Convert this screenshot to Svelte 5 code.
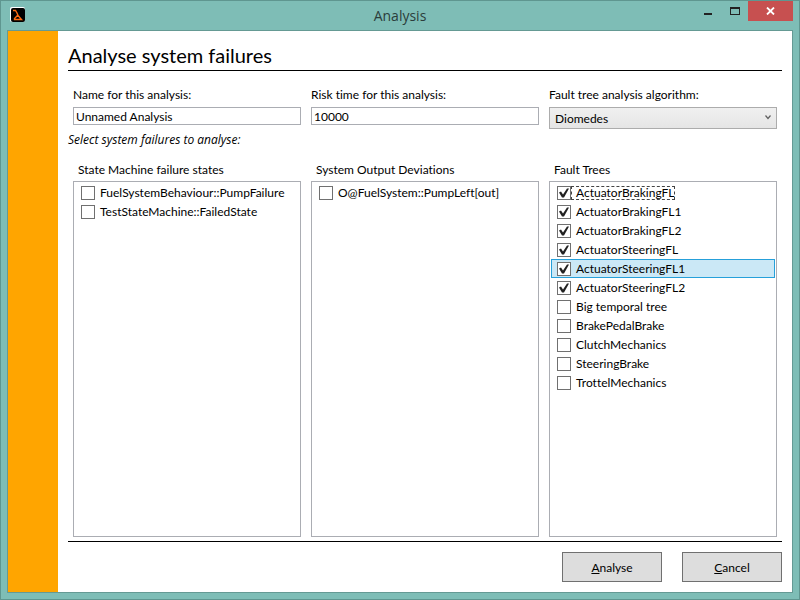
<script>
	let name = "Unnamed Analysis";
	let riskTime = "10000";
	let algorithm = "Diomedes";
	let selected = "ActuatorSteeringFL1";

	let groups = [
		{
			title: "State Machine failure states",
			items: [
				{ label: "FuelSystemBehaviour::PumpFailure", checked: false },
				{ label: "TestStateMachine::FailedState", checked: false },
			],
		},
		{
			title: "System Output Deviations",
			items: [{ label: "O@FuelSystem::PumpLeft[out]", checked: false }],
		},
		{
			title: "Fault Trees",
			items: [
				{ label: "ActuatorBrakingFL", checked: true, focused: true },
				{ label: "ActuatorBrakingFL1", checked: true },
				{ label: "ActuatorBrakingFL2", checked: true },
				{ label: "ActuatorSteeringFL", checked: true },
				{ label: "ActuatorSteeringFL1", checked: true },
				{ label: "ActuatorSteeringFL2", checked: true },
				{ label: "Big temporal tree", checked: false },
				{ label: "BrakePedalBrake", checked: false },
				{ label: "ClutchMechanics", checked: false },
				{ label: "SteeringBrake", checked: false },
				{ label: "TrottelMechanics", checked: false },
			],
		},
	];
</script>

<div class="window">
	<header>
		<svg class="logo" width="16" height="16" viewBox="0 0 16 16">
			<rect x="0" y="0" width="15" height="15" rx="2" fill="#fff" />
			<rect x="1" y="1" width="14" height="14" rx="2" fill="#000" />
			<path
				d="M3 3.5H5.5L7 6L8 8.5L11.5 12.5H4.5V11.5L8 8"
				fill="none"
				stroke="#ff6a10"
				stroke-width="1.4"
			/>
		</svg>
		<span class="caption">Analysis</span>
		<div class="controls">
			<button class="minimize" aria-label="Minimize">
				<svg width="8" height="8" viewBox="0 0 8 8">
					<rect x="0" y="6" width="8" height="2" fill="#222" />
				</svg>
			</button>
			<button class="maximize" aria-label="Maximize">
				<svg width="10" height="8" viewBox="0 0 10 8">
					<path d="M0 0H10V8H0ZM1 2V7H9V2Z" fill="#222" fill-rule="evenodd" />
				</svg>
			</button>
			<button class="close" aria-label="Close">
				<svg width="9" height="8" viewBox="0 0 9 8">
					<path d="M1 0.5L8 7.5M8 0.5L1 7.5" stroke="#fff" stroke-width="1.8" />
				</svg>
			</button>
		</div>
	</header>

	<div class="body">
		<div class="stripe"></div>
		<main>
			<h1>Analyse system failures</h1>

			<div class="columns fields">
				<div>
					<label for="name">Name for this analysis:</label>
					<input id="name" type="text" bind:value={name} />
				</div>
				<div>
					<label for="risk">Risk time for this analysis:</label>
					<input id="risk" type="text" bind:value={riskTime} />
				</div>
				<div>
					<label for="algorithm">Fault tree analysis algorithm:</label>
					<div class="combo">
						<select id="algorithm" bind:value={algorithm}>
							<option>Diomedes</option>
						</select>
						<svg width="6" height="5" viewBox="0 0 6 5">
							<path
								d="M0.5 0.5L3 3.5L5.5 0.5"
								fill="none"
								stroke="#606060"
								stroke-width="1.2"
							/>
						</svg>
					</div>
				</div>
			</div>

			<p class="hint">Select system failures to analyse:</p>

			<div class="columns lists">
				{#each groups as group}
					<section>
						<h2>{group.title}</h2>
						<ul>
							{#each group.items as item}
								<li class:selected={item.label == selected}>
									<label>
										<input type="checkbox" bind:checked={item.checked} />
										<span class:focused={item.focused}>{item.label}</span>
									</label>
								</li>
							{/each}
						</ul>
					</section>
				{/each}
			</div>

			<footer>
				<button><u>A</u>nalyse</button>
				<button><u>C</u>ancel</button>
			</footer>
		</main>
	</div>
</div>

<style>
	:global(body) {
		margin: 0;
	}
	.window {
		box-sizing: border-box;
		display: flex;
		flex-direction: column;
		min-height: 100vh;
		padding: 0 6px 6px;
		border: 1px solid #5f9690;
		background: #7ebdb6;
		color: #000;
		font-family: Lato, "Open Sans", sans-serif;
		font-size: 12px;
		font-variant-ligatures: none;
		line-height: 16px;
	}
	header {
		display: grid;
		grid-template-columns: 1fr auto 1fr;
		height: 29px;
	}
	.logo {
		margin: 6px 0 0 3px;
	}
	.caption {
		padding-top: 5px;
		color: #2b3d3b;
		font-family: "Open Sans", sans-serif;
		font-size: 14px;
		line-height: 20px;
	}
	.controls {
		display: flex;
		justify-content: flex-end;
		align-items: flex-start;
	}
	.controls button {
		display: flex;
		justify-content: center;
		align-items: center;
		width: 27px;
		height: 20px;
		padding: 0;
		border: 0;
		background: none;
	}
	.controls .close {
		width: 45px;
		background: #c75050;
	}
	.body {
		flex: 1;
		display: flex;
		border: 1px solid #659a94;
		background: #fff;
	}
	.stripe {
		flex: none;
		width: 50px;
		background: #ffa500;
	}
	main {
		flex: 1;
		display: flex;
		flex-direction: column;
		min-width: 0;
		padding: 10px;
	}
	h1 {
		margin: 0 0 16px;
		padding-bottom: 1px;
		border-bottom: 1px solid #000;
		font-size: 20px;
		font-weight: 400;
		line-height: 28px;
	}
	.columns {
		display: grid;
		grid-template-columns: repeat(3, minmax(0, 1fr));
		gap: 10px;
		padding: 0 5px;
	}
	.fields label {
		display: block;
		margin-bottom: 4px;
	}
	input[type="text"] {
		box-sizing: border-box;
		display: block;
		width: 100%;
		height: 18px;
		padding: 0 2px;
		border: 1px solid #abadb3;
		background: #fff;
		color: inherit;
		font: inherit;
	}
	.combo {
		position: relative;
	}
	select {
		box-sizing: border-box;
		display: block;
		appearance: none;
		width: 100%;
		height: 22px;
		padding: 2px 20px 0 5px;
		border: 1px solid #acacac;
		border-radius: 0;
		background: linear-gradient(#f0f0f0, #e5e5e5);
		color: inherit;
		font: inherit;
	}
	.combo svg {
		position: absolute;
		top: 8px;
		right: 6px;
		pointer-events: none;
	}
	.hint {
		margin: 3px 0 14px;
		font-family: "Open Sans", sans-serif;
		font-style: italic;
	}
	.lists {
		flex: 1;
	}
	section {
		display: flex;
		flex-direction: column;
	}
	h2 {
		margin: 0 0 3px;
		padding-left: 5px;
		font-size: 12px;
		font-weight: 400;
		line-height: 16px;
	}
	ul {
		flex: 1;
		margin: 0;
		padding: 1px;
		border: 1px solid #abadb3;
		list-style: none;
	}
	li {
		padding: 0 5px;
		border: 1px solid transparent;
	}
	li.selected {
		border-color: #26a0da;
		background: #cbe8f6;
	}
	li label {
		display: flex;
		align-items: center;
		height: 17px;
	}
	li span {
		padding-left: 5px;
		line-height: 14px;
		white-space: nowrap;
	}
	.focused {
		outline: 1px dashed #444;
		outline-offset: -1px;
	}
	input[type="checkbox"] {
		box-sizing: border-box;
		flex: none;
		appearance: none;
		width: 14px;
		height: 14px;
		margin: 0;
		border: 1px solid #707070;
		background: #fff;
	}
	input[type="checkbox"]:checked::before {
		content: "";
		display: block;
		width: 12px;
		height: 12px;
		background: #212121;
		clip-path: polygon(1px 6px, 3px 5px, 5px 8px, 9px 2px, 11px 2px, 6px 11px, 4px 11px);
	}
	footer {
		display: flex;
		justify-content: flex-end;
		gap: 20px;
		margin-top: 4px;
		padding-top: 10px;
		border-top: 1px solid #000;
	}
	footer button {
		width: 100px;
		height: 30px;
		padding: 2px 0 0;
		border: 1px solid #707070;
		background: #ddd;
		color: inherit;
		font: inherit;
	}
</style>
